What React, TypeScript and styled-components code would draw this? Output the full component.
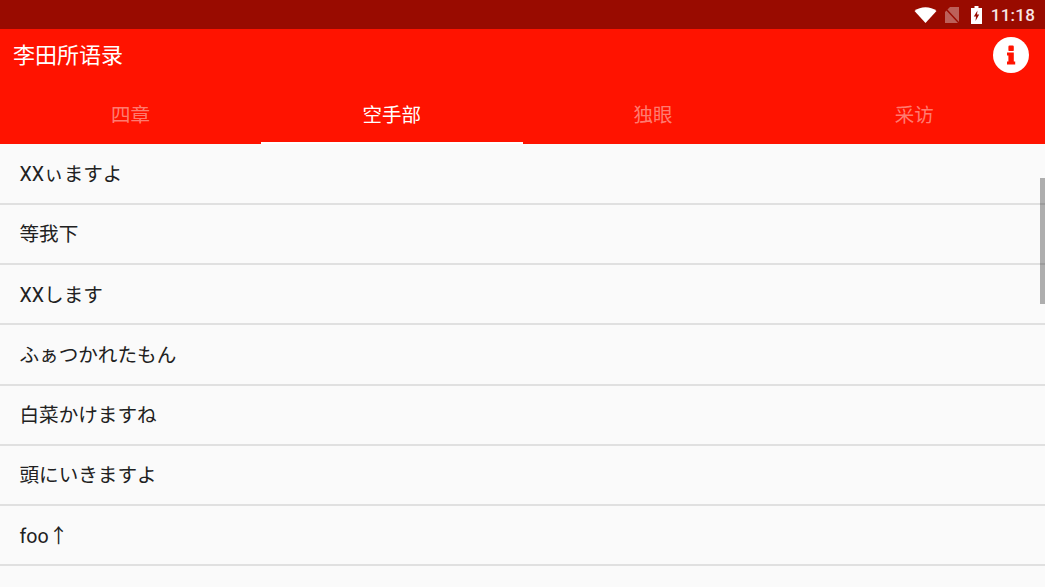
import React from "react";
import styled, { createGlobalStyle } from "styled-components";

const tabs = ["四章", "空手部", "独眼", "采访"];
const rows = ["XXぃますよ", "等我下", "XXします", "ふぁつかれたもん", "白菜かけますね", "頭にいきますよ", "foo↑"];

const GlobalStyle = createGlobalStyle`
    html, body {
        margin: 0;
        padding: 0;
        background: #fafafa;
    }
`;

const Screen = styled.div`
    width: 1045px;
    height: 587px;
    overflow: hidden;
    position: relative;
    background: #fafafa;
    font-family: "Roboto", "Noto Sans CJK JP", sans-serif;
`;

const StatusBar = styled.div`
    height: 29px;
    background: #990b00;
    display: flex;
    align-items: center;
    justify-content: flex-end;
    padding-right: 10px;
    color: #fff;
`;

const Clock = styled.span`
    font-size: 17px;
    font-weight: 500;
    margin-left: 9px;
    letter-spacing: 0.2px;
    color: #f7e6e5;
`;

const StatusIcon = styled.svg<{ $gap?: number }>`
    display: block;
    margin-left: ${props => props.$gap ?? 0}px;
`;

const Header = styled.div`
    background: #ff1300;
    height: 115px;
`;

const TitleRow = styled.div`
    height: 52px;
    display: flex;
    align-items: center;
    justify-content: space-between;
    padding: 0 16px 0 13px;
`;

const Title = styled.div`
    color: #fff;
    font-size: 22px;
    padding-bottom: 4px;
    font-family: "Noto Sans CJK SC", sans-serif;
`;

const TabBar = styled.div`
    height: 63px;
    display: grid;
    grid-template-columns: repeat(4, 1fr);
`;

const Tab = styled.div<{ $active?: boolean }>`
    display: flex;
    align-items: center;
    justify-content: center;
    box-sizing: border-box;
    padding-top: 4px;
    font-size: 19.5px;
    font-family: "Noto Sans CJK SC", sans-serif;
    color: ${props => (props.$active ? "#fff" : "rgba(255,255,255,0.45)")};
    border-bottom: 2px solid ${props => (props.$active ? "#fff" : "transparent")};
`;

const List = styled.div`
    display: flex;
    flex-direction: column;
    padding-top: 0.6px;
`;

const Row = styled.div`
    height: 60.25px;
    box-sizing: border-box;
    padding: 0 0 2px 19.5px;
    display: flex;
    align-items: center;
    font-size: 19.6px;
    color: #212121;
    border-bottom: 2px solid #e0e0e0;
`;

const ScrollThumb = styled.div`
    position: absolute;
    right: 0;
    top: 178px;
    width: 5px;
    height: 126px;
    background: rgba(0, 0, 0, 0.3);
`;

export default function App() {
    return (
        <Screen>
            <GlobalStyle />
            <StatusBar>
                <StatusIcon width="23" height="16" viewBox="0 0 22 16">
                    <path d="M11 16 L0 4 C6 -1 16 -1 22 4 Z" fill="#fff" />
                </StatusIcon>
                <StatusIcon $gap={8} width="14" height="16" viewBox="0 0 14 16">
                    <path d="M5 0 H14 V16 H0 V5 Z" fill="#fff" fillOpacity="0.35" />
                    <path d="M0 1 L14 16" stroke="#990b00" strokeWidth="1.5" />
                </StatusIcon>
                <StatusIcon $gap={12} width="11" height="18" viewBox="0 0 11 18">
                    <path d="M3.5 0 H7.5 V2 H11 V18 H0 V2 H3.5 Z" fill="#fff" />
                    <path d="M6.5 4.5 L2.8 10.5 H5 L4.5 15 L8.2 8.5 H6 Z" fill="#990b00" />
                </StatusIcon>
                <Clock>11:18</Clock>
            </StatusBar>
            <Header>
                <TitleRow>
                    <Title>李田所语录</Title>
                    <svg width="36" height="36" viewBox="0 0 36 36">
                        <circle cx="18" cy="18" r="18" fill="#fff" />
                        <rect x="15.4" y="8.5" width="5.4" height="5.6" rx="1.2" fill="#ff1300" />
                        <path d="M14 15.6 H20.8 V24.6 H22.2 V27.6 H14 V24.6 H15.4 V18.6 H14 Z" fill="#ff1300" />
                    </svg>
                </TitleRow>
                <TabBar>
                    {tabs.map((t, i) => (
                        <Tab key={t} $active={i === 1}>{t}</Tab>
                    ))}
                </TabBar>
            </Header>
            <List>
                {rows.map(r => (
                    <Row key={r}>{r}</Row>
                ))}
            </List>
            <ScrollThumb />
        </Screen>
    );
}
